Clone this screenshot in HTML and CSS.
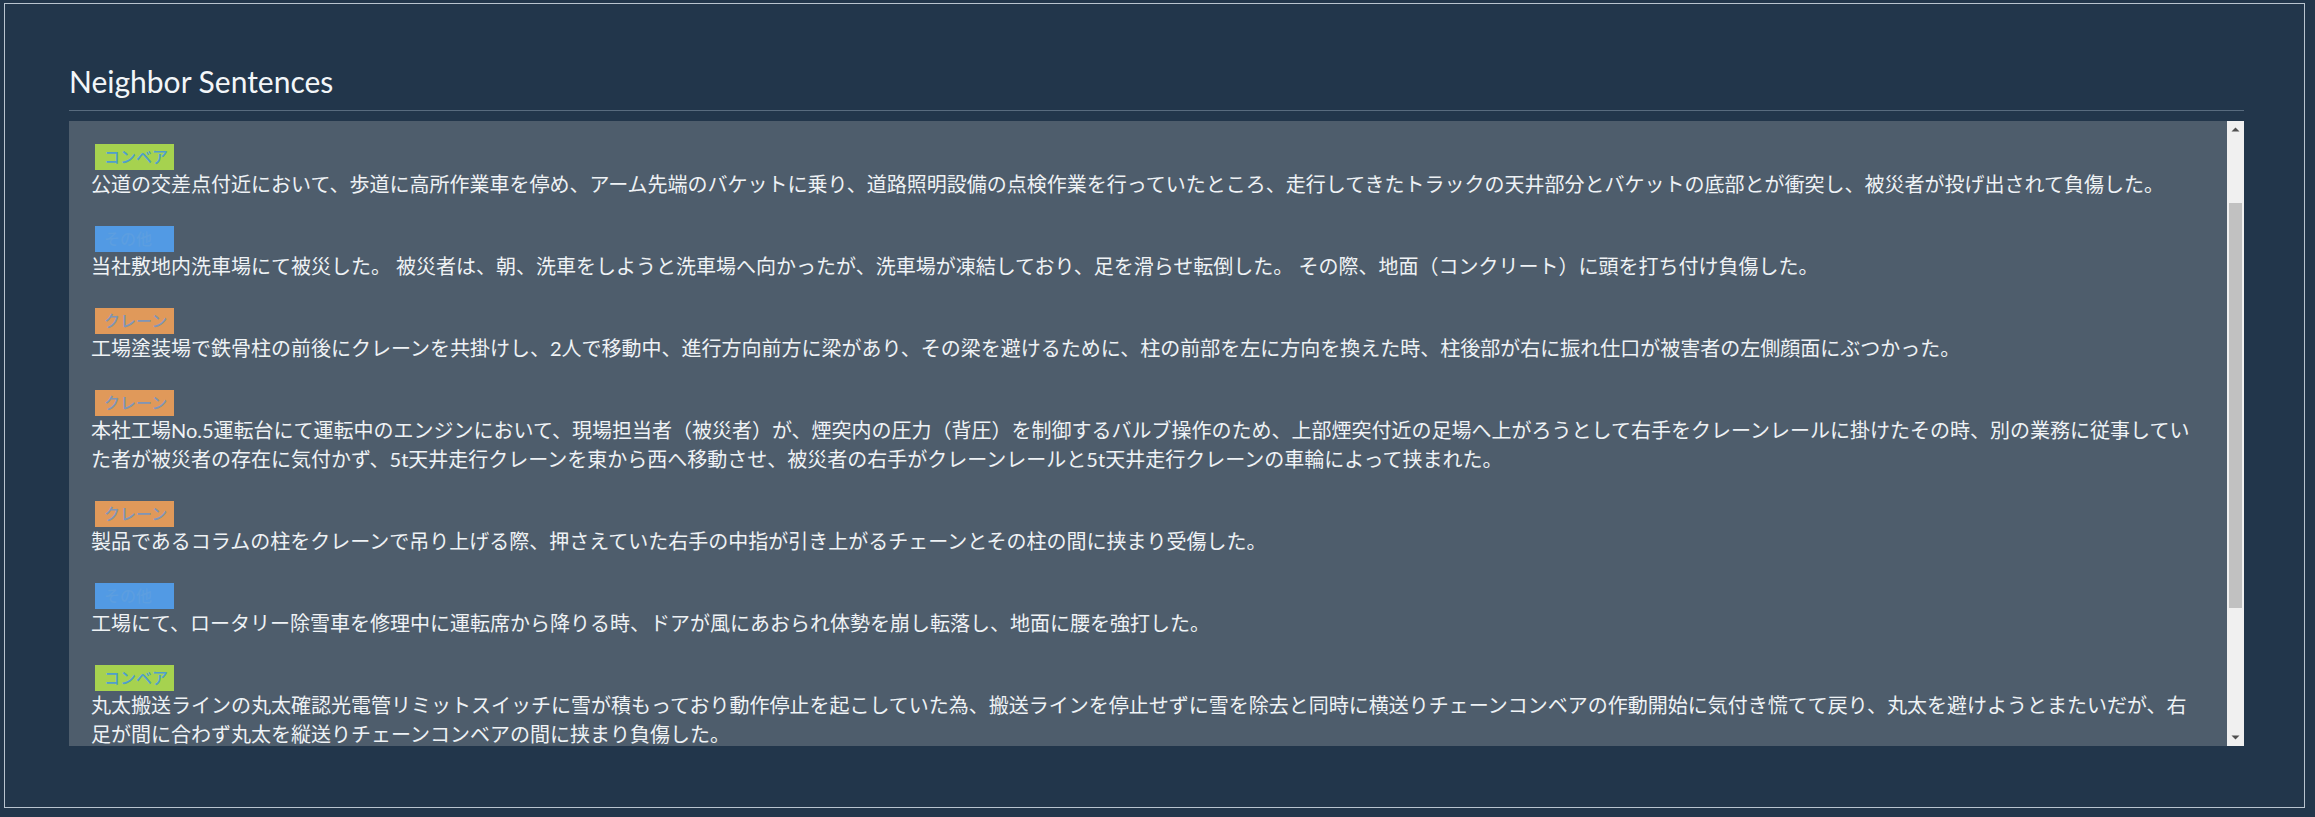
FILE: index.html
```html
<!DOCTYPE html>
<html lang="ja">
<head>
<meta charset="utf-8">
<title>Neighbor Sentences</title>
<link rel="stylesheet" href="styles.css">
</head>
<body>
<div class="frame">
  <h2 class="title">Neighbor Sentences</h2>
  <div class="list">
    <div class="list-body">
      <div class="item">
        <span class="tag tag-green">コンベア</span>
        <p class="text">公道の交差点付近において、歩道に高所作業車を停め、アーム先端のバケットに乗り、道路照明設備の点検作業を行っていたところ、走行してきたトラックの天井部分とバケットの底部とが衝突し、被災者が投げ出されて負傷した。</p>
      </div>
      <div class="item">
        <span class="tag tag-blue">その他</span>
        <p class="text">当社敷地内洗車場にて被災した。 被災者は、朝、洗車をしようと洗車場へ向かったが、洗車場が凍結しており、足を滑らせ転倒した。 その際、地面（コンクリート）に頭を打ち付け負傷した。</p>
      </div>
      <div class="item">
        <span class="tag tag-orange">クレーン</span>
        <p class="text">工場塗装場で鉄骨柱の前後にクレーンを共掛けし、2人で移動中、進行方向前方に梁があり、その梁を避けるために、柱の前部を左に方向を換えた時、柱後部が右に振れ仕口が被害者の左側顔面にぶつかった。</p>
      </div>
      <div class="item">
        <span class="tag tag-orange">クレーン</span>
        <p class="text">本社工場No.5運転台にて運転中のエンジンにおいて、現場担当者（被災者）が、煙突内の圧力（背圧）を制御するバルブ操作のため、上部煙突付近の足場へ上がろうとして右手をクレーンレールに掛けたその時、別の業務に従事していた者が被災者の存在に気付かず、5t天井走行クレーンを東から西へ移動させ、被災者の右手がクレーンレールと5t天井走行クレーンの車輪によって挟まれた。</p>
      </div>
      <div class="item">
        <span class="tag tag-orange">クレーン</span>
        <p class="text">製品であるコラムの柱をクレーンで吊り上げる際、押さえていた右手の中指が引き上がるチェーンとその柱の間に挟まり受傷した。</p>
      </div>
      <div class="item">
        <span class="tag tag-blue">その他</span>
        <p class="text">工場にて、ロータリー除雪車を修理中に運転席から降りる時、ドアが風にあおられ体勢を崩し転落し、地面に腰を強打した。</p>
      </div>
      <div class="item">
        <span class="tag tag-green">コンベア</span>
        <p class="text">丸太搬送ラインの丸太確認光電管リミットスイッチに雪が積もっており動作停止を起こしていた為、搬送ラインを停止せずに雪を除去と同時に横送りチェーンコンベアの作動開始に気付き慌てて戻り、丸太を避けようとまたいだが、右足が間に合わず丸太を縦送りチェーンコンベアの間に挟まり負傷した。</p>
      </div>
    </div>
    <div class="scrollbar">
      <div class="sb-btn">
        <svg width="17" height="17" viewBox="0 0 17 17"><path d="M4.5 10.5 L8.5 6.5 L12.5 10.5 Z" fill="#505050"/></svg>
      </div>
      <div class="sb-track">
        <div class="sb-thumb"></div>
      </div>
      <div class="sb-btn">
        <svg width="17" height="17" viewBox="0 0 17 17"><path d="M4.5 6.5 L8.5 10.5 L12.5 6.5 Z" fill="#505050"/></svg>
      </div>
    </div>
  </div>
</div>
</body>
</html>
```
FILE: styles.css
```css
html, body {
  margin: 0;
  padding: 0;
}
body {
  background: #22364b;
  padding: 3px 10px 9px 4px;
  font-family: Lato, "Noto Sans CJK JP", sans-serif;
  color: #eef2f5;
}
.frame {
  border: 1px solid #b9c4cf;
  box-sizing: border-box;
  height: 805px;
  padding: 58px 60px 0 64px;
}
.title {
  margin: 0;
  font-family: Lato, "Noto Sans CJK JP", sans-serif;
  font-weight: 400;
  font-size: 30px;
  line-height: 38px;
  color: #f3f6f9;
  padding-bottom: 10px;
  border-bottom: 1px solid #586b7e;
}
.list {
  margin-top: 10px;
  height: 625px;
  background: #4e5d6c;
  display: flex;
}
.list-body {
  flex: 1;
  min-width: 0;
  overflow: hidden;
  padding: 23px 22px 0 22px;
}
.scrollbar {
  width: 17px;
  flex: none;
  background: #f0f0f0;
  display: flex;
  flex-direction: column;
}
.sb-btn {
  height: 17px;
  flex: none;
}
.sb-btn svg {
  display: block;
}
.sb-track {
  flex: 1;
  padding: 0 2px;
}
.sb-thumb {
  margin-top: 65px;
  height: 405px;
  background: #c1c1c1;
}
.item {
  margin-bottom: 27px;
}
.tag {
  display: block;
  box-sizing: border-box;
  width: 79px;
  height: 26px;
  line-height: 26px;
  padding: 0 0 0 9px;
  margin-left: 4px;
  font-size: 16px;
  font-weight: 500;
  white-space: nowrap;
  overflow: hidden;
}
.tag-green {
  background: #a6d24f;
  color: #4f9fcc;
}
.tag-orange {
  background: #e0995a;
  color: #8095b6;
}
.tag-blue {
  background: #529ae4;
  color: #5c9ee0;
}
.text {
  margin: 0;
  font-size: 20px;
  line-height: 29px;
  color: #eef2f5;
}
```
